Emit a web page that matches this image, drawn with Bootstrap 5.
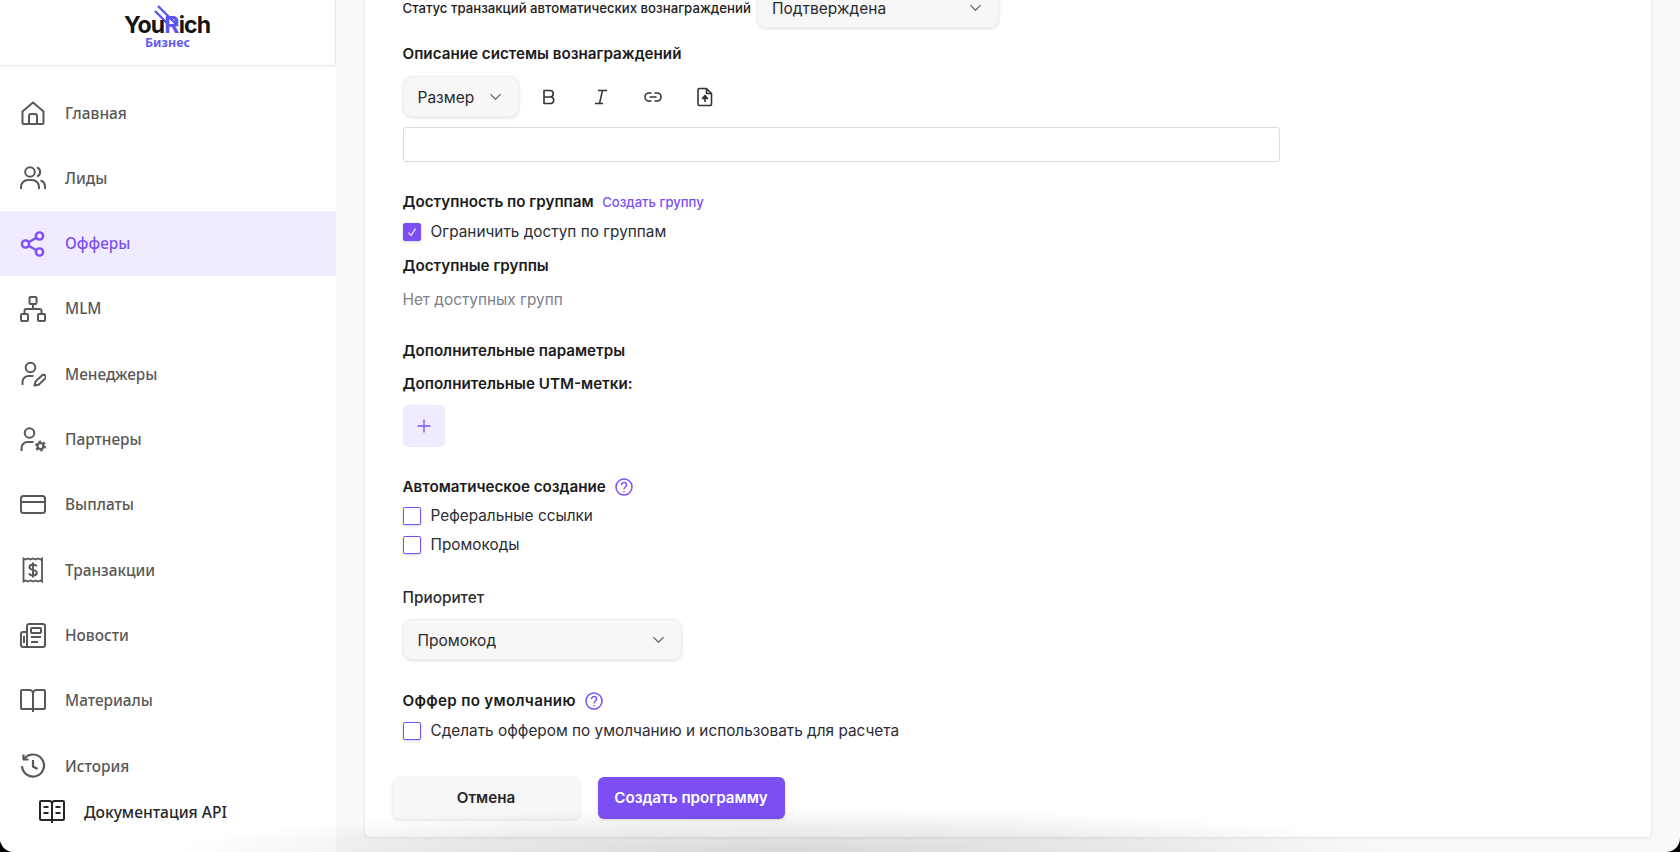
<!DOCTYPE html>
<html lang="ru">
<head>
<meta charset="utf-8">
<title>YouRich Бизнес</title>
<link href="https://cdn.jsdelivr.net/npm/bootstrap@5.3.0/dist/css/bootstrap.min.css" rel="stylesheet">
<style>
html,body{height:852px;margin:0;overflow:hidden;background:#000}
body{font-family:"Inter","Noto Sans",sans-serif;color:#1d1d22}
.app-shell{height:852px;background:#f9f9f9;border-radius:0 0 14px 14px;overflow:hidden;position:relative}
.side-panel{width:336px;flex:none;background:#fff;height:852px;font-family:"Noto Sans",sans-serif}
.logo-box{height:66px;border-bottom:1px solid #e8e8e8;border-right:1px solid #e8e8e8;box-shadow:0 1px 2px rgba(0,0,0,.04)}
.logo-wrap{position:relative;width:88px;height:50px;margin-top:3px;margin-left:1px}
.logo-word{position:absolute;left:0;top:13px;font:700 23px/18px "Inter",sans-serif;letter-spacing:-.8px;color:#141414;white-space:nowrap}
.logo-word b{color:#5a55ee;font-weight:700}
.logo-sub{position:absolute;left:21px;top:33px;font:700 12.5px/14px "Noto Sans",sans-serif;color:#5f5cf0}
.logo-mark{position:absolute;left:30px;top:0}
.side-list{margin-top:14.5px}
.side-link{height:65.3px;padding-left:20px;gap:19px;color:#585858;font-size:15.4px;font-weight:500;text-decoration:none}
.side-link svg{width:26px;height:26px;flex:none}
.side-link.is-on{background:#f0ebfe;color:#7c4ff5}
.api-link{margin-top:-1.5px;padding-left:39px;gap:19px;color:#26262a;font-size:15.6px;font-weight:500;height:30px;text-decoration:none}
.api-link svg{width:26px;height:26px}
.main-pane{padding:0 28px 14px 28px;height:852px;overflow:hidden}
.form-sheet{background:#fff;border:1px solid #e9e9e9;border-radius:5px;padding:0 38px 18px 37.5px;box-shadow:0 1px 2px rgba(0,0,0,.05)}
.ttl{font-size:15.2px;font-weight:600;line-height:24px;color:#1b1b20}
.ttl-wide{letter-spacing:.3px}
.ttl-small{font-size:13.2px;font-weight:500;line-height:24px;width:345.5px;flex:none;white-space:nowrap}
.txt-line{font-size:15.35px;line-height:24px;color:#2c2c33}
.fld{height:41px;background-color:#f7f7f7;border:1px solid #efefef;border-radius:9px;box-shadow:0 1px 3px rgba(0,0,0,.12);font-size:15.5px;color:#2a2a30;padding:2px 14px 0;background-position:right 16px center;background-size:13px 13px;background-image:url("data:image/svg+xml,%3Csvg xmlns='http://www.w3.org/2000/svg' viewBox='0 0 14 14'%3E%3Cpath d='M1.500 4.500 7 10l5.500-5.500' fill='none' stroke='%23666' stroke-width='1.300'/%3E%3C/svg%3E")}
.fld-status{width:242px;margin-left:9px}
.fld-size{width:116px}
.fld-prio{width:279px}
.tool-btn{width:52px;height:41px;padding:0;border:0;background:none;color:#333}
.tool-btn svg{display:block;margin:0 auto}
.tool-row{height:41px}
.tool-first{margin-left:4px}
.rich-area{width:877px;height:35px;border:1px solid #dcdcdc;border-radius:3px;box-shadow:0 0 2px rgba(0,0,0,.06)}
.hint-link{font-size:13.1px;color:#7c4ff5;text-decoration:none;margin-left:8.5px;font-weight:500;line-height:24px}
.muted-line{font-size:15.35px;line-height:24px;color:#7c808c}
.plus-btn{width:42px;height:42px;background:#f0ebfe;border:0;border-radius:5px;padding:0}
.chk-row{height:24px;gap:10px;margin:0;padding:0}
.chk-row .form-check-input{width:18px;height:18px;margin:0;float:none;border:1.5px solid #7c4ff5;border-radius:2px;box-shadow:0 1px 3px rgba(0,0,0,.18);flex:none}
.chk-row .form-check-input:checked{background-color:#7c4ff5;border-color:#7c4ff5;background-size:12px;background-image:url("data:image/svg+xml,%3Csvg xmlns='http://www.w3.org/2000/svg' viewBox='0 0 12 12'%3E%3Cpath d='M2.500 6.500 5 9.500l4.500-7' fill='none' stroke='%23fff' stroke-width='1.100'/%3E%3C/svg%3E")}
.help-ico{width:18px;height:18px;margin-left:9px}
.act-btn{width:187px;height:42px;border-radius:6px;font-size:15.2px;font-weight:600;padding:1px 0 0;box-shadow:0 1px 3px rgba(0,0,0,.14)}
.act-plain{background:#f7f7f7;border:0;color:#26262b;margin-left:-10px}
.act-main{background:#7c4ff5;border:0;color:#fff;margin-left:18px}
.act-main:hover{background:#7c4ff5;color:#fff}
.sp5{margin-top:5px}.sp6{margin-top:6px}.sp9{margin-top:9px}.sp10{margin-top:10px}.sp14{margin-top:14px}.sp27{margin-top:27px}.sp28{margin-top:28px}.sp29{margin-top:29px}.sp34{margin-top:34px}
.bottom-fade{position:absolute;left:170px;bottom:0;width:1230px;height:70px;pointer-events:none;background:radial-gradient(ellipse 615px 44px at 50% 100%,rgba(0,0,0,.13),rgba(0,0,0,.07) 55%,rgba(0,0,0,0) 100%)}
</style>
</head>
<body>
<div class="app-shell d-flex">
  <aside class="side-panel d-flex flex-column">
    <div class="logo-box d-flex justify-content-center">
      <div class="logo-wrap">
        <svg class="logo-mark" width="30" height="30" viewBox="0 0 30 30" fill="none" stroke="#5a55ee" stroke-width="2.400"><path d="M4 3 24 23M1 8l13 13"/></svg>
        <div class="logo-word">You<b>R</b>ich</div>
        <div class="logo-sub">Бизнес</div>
      </div>
    </div>
    <nav class="side-list d-flex flex-column">
      <a class="side-link d-flex align-items-center" href="#"><svg viewBox="0 0 26 26" fill="none" stroke="currentColor" stroke-width="2" stroke-linejoin="round"><path d="M2.500 11.500 13 2.500l10.500 9V23a1 1 0 0 1-1 1h-19a1 1 0 0 1-1-1z"/><path d="M9 24v-8a2 2 0 0 1 2-2h4a2 2 0 0 1 2 2v8"/></svg>Главная</a>
      <a class="side-link d-flex align-items-center" href="#"><svg viewBox="0 0 26 26" fill="none" stroke="currentColor" stroke-width="2"><circle cx="10" cy="7" r="4.800"/><path d="M1 24v-2a7 7 0 0 1 7-7h4a7 7 0 0 1 7 7v2M17 2.500a4.800 4.800 0 0 1 0 9M20.500 15.500a6.500 6.500 0 0 1 4.500 6V24"/></svg>Лиды</a>
      <a class="side-link is-on d-flex align-items-center" href="#"><svg viewBox="0 0 26 26" fill="none" stroke="currentColor" stroke-width="2.400"><circle cx="19.500" cy="5" r="3.600"/><circle cx="5.500" cy="13" r="3.600"/><circle cx="19.500" cy="21" r="3.600"/><path d="M8.700 11.200l7.600-4.400M8.700 14.800l7.600 4.400"/></svg>Офферы</a>
      <a class="side-link d-flex align-items-center" href="#"><svg viewBox="0 0 26 26" fill="none" stroke="currentColor" stroke-width="2" stroke-linejoin="round"><rect x="9.500" y="1" width="7" height="7" rx="1"/><rect x="1" y="18" width="7" height="7" rx="1"/><rect x="18" y="18" width="7" height="7" rx="1"/><path d="M13 8v5M4.500 18v-3a2 2 0 0 1 2-2h13a2 2 0 0 1 2 2v3"/></svg>MLM</a>
      <a class="side-link d-flex align-items-center" href="#"><svg viewBox="0 0 26 26" fill="none" stroke="currentColor" stroke-width="2"><circle cx="10.500" cy="6.500" r="4.800"/><path d="M2.500 24v-3a6 6 0 0 1 6-6h5"/><path d="M14.500 24.500l1-4 7-6.500a2.300 2.300 0 0 1 3 3.200l-6.800 6.600z" stroke-linejoin="round"/></svg>Менеджеры</a>
      <a class="side-link d-flex align-items-center" href="#"><svg viewBox="0 0 26 26" fill="none" stroke="currentColor" stroke-width="2"><circle cx="9.500" cy="6" r="4.800"/><path d="M1.500 24v-3a6 6 0 0 1 6-6h6"/><circle cx="20.500" cy="19" r="3" stroke-width="2.200"/><circle cx="20.500" cy="19" r="4.600" stroke-width="1.800" stroke-dasharray="2.400 2.400"/></svg>Партнеры</a>
      <a class="side-link d-flex align-items-center" href="#"><svg viewBox="0 0 26 26" fill="none" stroke="currentColor" stroke-width="2"><rect x="1" y="4" width="24" height="17" rx="2.500"/><path d="M1 10h24"/></svg>Выплаты</a>
      <a class="side-link d-flex align-items-center" href="#"><svg viewBox="0 0 26 26" fill="none" stroke="currentColor" stroke-width="2"><path d="M3.500 1.500l2 1 2.500-1 2.500 1 2.500-1 2.500 1 2.500-1 2.500 1 1.500-1v23l-1.500-1-2.500 1-2.500-1-2.500 1-2.500-1-2.500 1-2.500-1-2 1z" stroke-width="1.800"/><path d="M16.500 9.500c-.5-1.500-1.800-2-3.500-2-2 0-3.500 1-3.500 2.700 0 3.600 7.300 1.800 7.300 5.500 0 1.700-1.500 2.800-3.800 2.800-2 0-3.400-.8-3.800-2.300M13 5.500v15"/></svg>Транзакции</a>
      <a class="side-link d-flex align-items-center" href="#"><svg viewBox="0 0 26 26" fill="none" stroke="currentColor" stroke-width="2" stroke-linejoin="round"><path d="M7 24V3a2 2 0 0 1 2-2h14a2 2 0 0 1 2 2v19a2 2 0 0 1-2 2H3a2 2 0 0 1-2-2V11a2 2 0 0 1 2-2h4"/><rect x="11" y="5" width="10" height="5" rx="1"/><path d="M11 14h10M11 19h7M4 13v7"/></svg>Новости</a>
      <a class="side-link d-flex align-items-center" href="#"><svg viewBox="0 0 26 26" fill="none" stroke="currentColor" stroke-width="2" stroke-linejoin="round"><path d="M13 5.500A3.500 3.500 0 0 0 9.500 2H2a1 1 0 0 0-1 1v17a1 1 0 0 0 1 1h11M13 5.500A3.500 3.500 0 0 1 16.500 2H24a1 1 0 0 1 1 1v17a1 1 0 0 1-1 1H13M13 5.500V24"/></svg>Материалы</a>
      <a class="side-link d-flex align-items-center" href="#"><svg viewBox="0 0 26 26" fill="none" stroke="currentColor" stroke-width="2.200"><path d="M4.500 5.500A11 11 0 1 1 2 13"/><path d="M3.500 1.500v5h5" stroke-linejoin="round"/><path d="M13 7v6.500l4.500 2.500"/></svg>История</a>
    </nav>
    <a class="api-link d-flex align-items-center" href="#"><svg viewBox="0 0 26 26" fill="none" stroke="#26262a" stroke-width="2" stroke-linejoin="round"><path d="M13 4.500A2.500 2.500 0 0 0 10.500 2H2a1 1 0 0 0-1 1v17a1 1 0 0 0 1 1h11M13 4.500A2.500 2.500 0 0 1 15.500 2H24a1 1 0 0 1 1 1v17a1 1 0 0 1-1 1H13M13 4.500V24M4.500 8h5M4.500 14h5M16.500 8h5M16.500 14h5"/></svg>Документация API</a>
  </aside>

  <main class="main-pane flex-grow-1 d-flex flex-column justify-content-end">
    <form class="form-sheet">
      <div class="d-flex align-items-center">
        <span class="ttl-small">Статус транзакций автоматических вознаграждений</span>
        <select class="form-select fld fld-status"><option>Подтверждена</option></select>
      </div>
      <div class="ttl sp14">Описание системы вознаграждений</div>
      <div class="tool-row d-flex align-items-center sp10">
        <select class="form-select fld fld-size"><option>Размер</option></select>
        <button type="button" class="tool-btn tool-first"><svg width="18" height="18" viewBox="0 0 18 18" fill="none" stroke="#333" stroke-width="1.600" stroke-linejoin="round"><path d="M4 2.500h6a3.200 3.200 0 0 1 0 6.500H4zM4 9h7a3.300 3.300 0 0 1 0 6.500H4z"/></svg></button>
        <button type="button" class="tool-btn"><svg width="18" height="18" viewBox="0 0 18 18" fill="none" stroke="#333" stroke-width="1.500"><path d="M6 2.500h9M3 15.500h8M10.500 2.500l-3 13"/></svg></button>
        <button type="button" class="tool-btn"><svg width="18" height="18" viewBox="0 0 18 18" fill="none" stroke="#333" stroke-width="1.600"><path d="M7.500 5H5a4 4 0 0 0 0 8h2.500M10.500 5H13a4 4 0 0 1 0 8h-2.500M5.500 9h7"/></svg></button>
        <button type="button" class="tool-btn"><svg width="18" height="20" viewBox="0 0 18 20" fill="none" stroke="#333" stroke-width="1.600" stroke-linejoin="round"><path d="M3.500 1.500h7l5 5V17a1.500 1.500 0 0 1-1.500 1.500H3.500A1.500 1.500 0 0 1 2 17V3a1.500 1.500 0 0 1 1.500-1.500zM10.500 1.500v5h5"/><path d="M9 15V9.500"/><path d="M6.500 11.500 9 8.500l2.500 3z" fill="#333"/></svg></button>
      </div>
      <div class="rich-area sp10"></div>
      <div class="d-flex align-items-center sp28"><span class="ttl">Доступность по группам</span><a class="hint-link" href="#">Создать группу</a></div>
      <label class="form-check chk-row d-flex align-items-center sp6"><input class="form-check-input" type="checkbox" checked><span class="txt-line">Ограничить доступ по группам</span></label>
      <div class="ttl sp10">Доступные группы</div>
      <div class="muted-line sp10">Нет доступных групп</div>
      <div class="ttl sp27">Дополнительные параметры</div>
      <div class="ttl sp9">Дополнительные UTM-метки:</div>
      <button type="button" class="plus-btn d-flex align-items-center justify-content-center sp9"><svg width="14" height="14" viewBox="0 0 14 14" fill="none" stroke="#7c4ff5" stroke-width="1.300"><path d="M7 .5v13M.5 7h13"/></svg></button>
      <div class="d-flex align-items-center sp28"><span class="ttl">Автоматическое создание</span><svg class="help-ico" viewBox="0 0 18 18" fill="none" stroke="#7c4ff5" stroke-width="1.500"><circle cx="9" cy="9" r="8"/><path d="M6.500 7a2.500 2.500 0 1 1 3.900 2c-.9.600-1.400 1-1.400 2.200"/><path d="M9 13v1.300"/></svg></div>
      <label class="form-check chk-row d-flex align-items-center sp5"><input class="form-check-input" type="checkbox"><span class="txt-line">Реферальные ссылки</span></label>
      <label class="form-check chk-row d-flex align-items-center sp5"><input class="form-check-input" type="checkbox"><span class="txt-line">Промокоды</span></label>
      <div class="txt-line fw-medium sp29">Приоритет</div>
      <select class="form-select fld fld-prio sp9"><option>Промокод</option></select>
      <div class="d-flex align-items-center sp29"><span class="ttl ttl-wide">Оффер по умолчанию</span><svg class="help-ico" viewBox="0 0 18 18" fill="none" stroke="#7c4ff5" stroke-width="1.500"><circle cx="9" cy="9" r="8"/><path d="M6.500 7a2.500 2.500 0 1 1 3.900 2c-.9.600-1.400 1-1.400 2.200"/><path d="M9 13v1.300"/></svg></div>
      <label class="form-check chk-row d-flex align-items-center sp6"><input class="form-check-input" type="checkbox"><span class="txt-line">Сделать оффером по умолчанию и использовать для расчета</span></label>
      <div class="d-flex sp34">
        <button type="button" class="btn act-btn act-plain">Отмена</button>
        <button type="button" class="btn act-btn act-main">Создать программу</button>
      </div>
    </form>
  </main>
  <div class="bottom-fade"></div>
</div>
<script src="https://cdn.jsdelivr.net/npm/bootstrap@5.3.0/dist/js/bootstrap.bundle.min.js"></script>
</body>
</html>
